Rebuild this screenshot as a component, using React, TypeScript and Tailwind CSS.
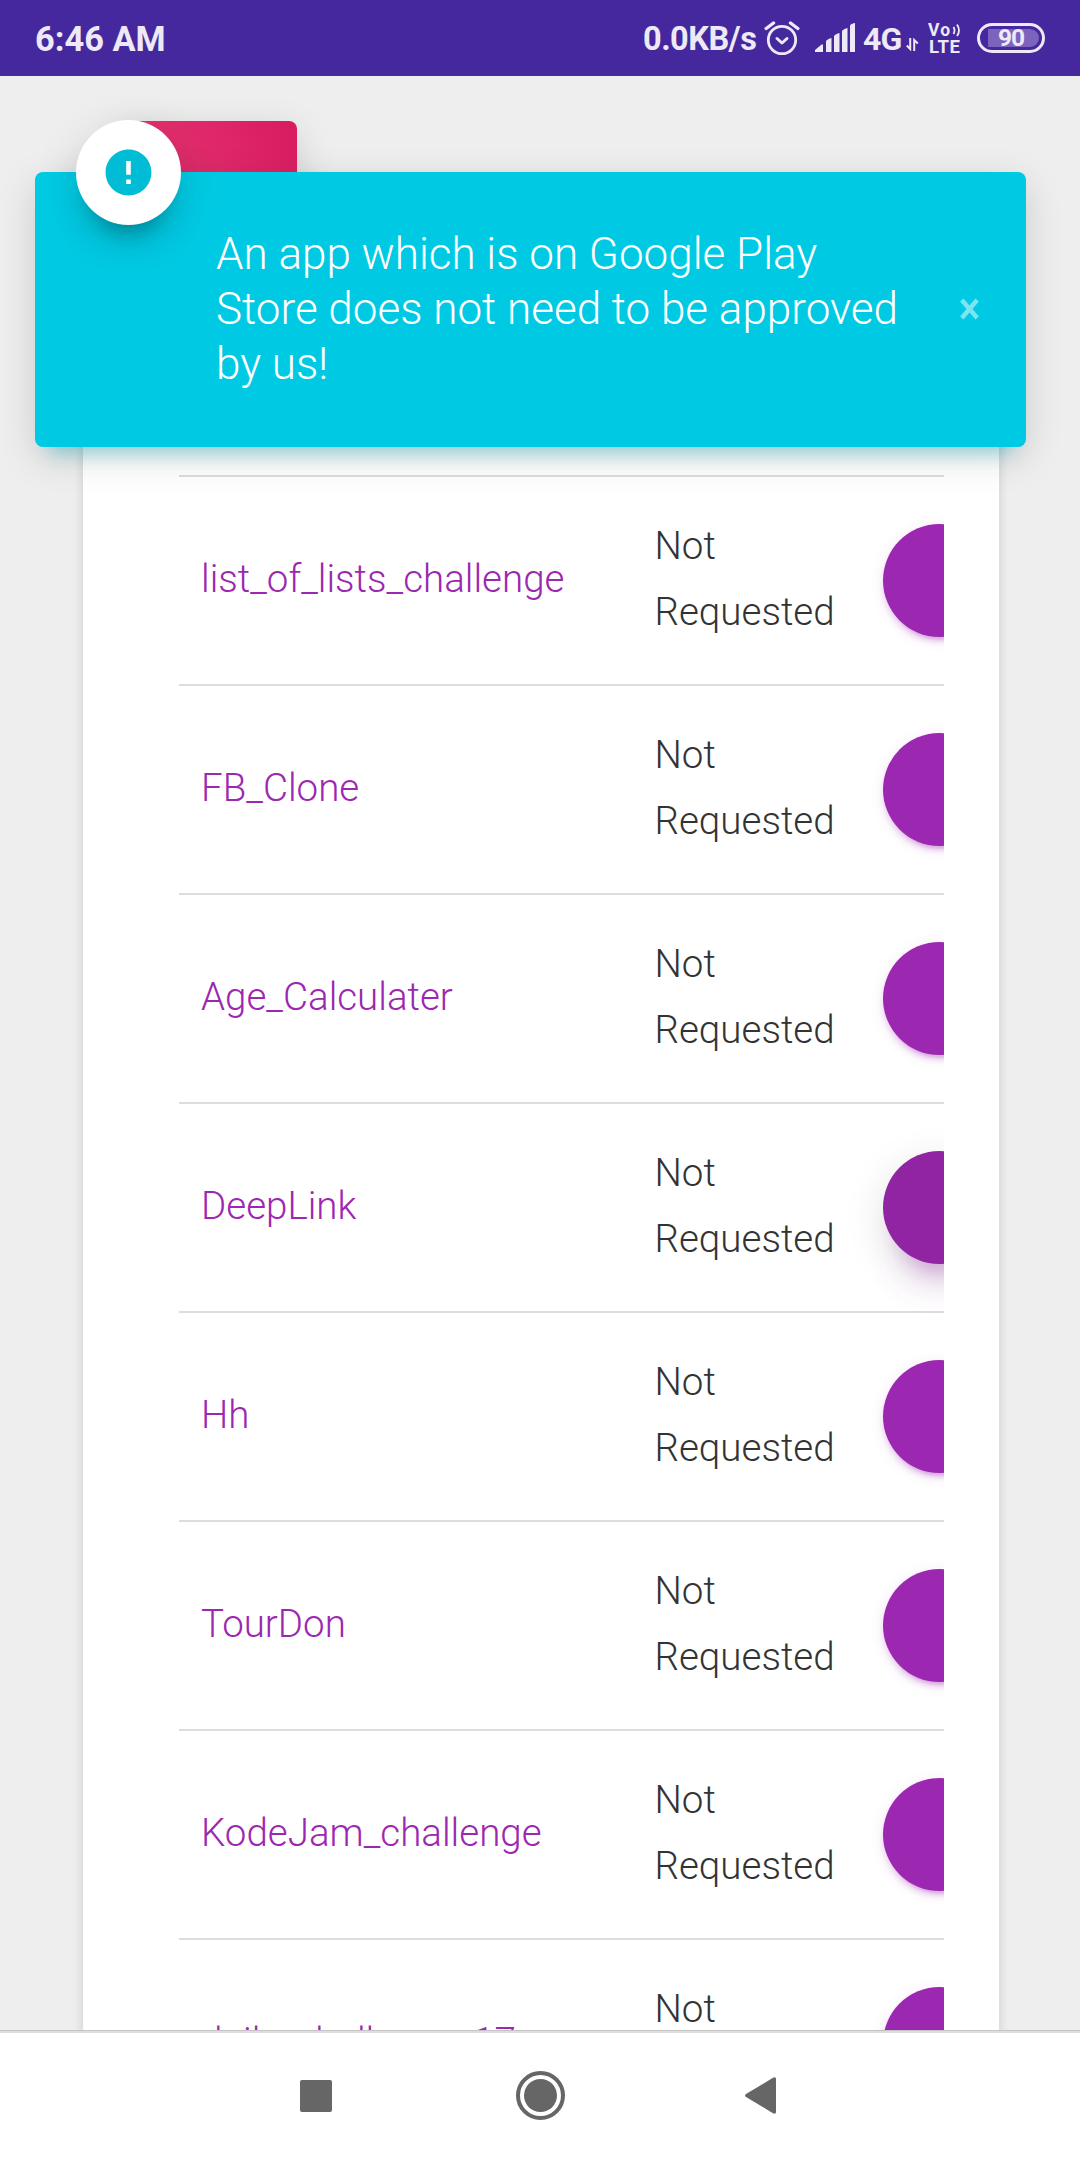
import { MdError } from "react-icons/md";

const challenges = [
  { name: "list_of_lists_challenge" },
  { name: "FB_Clone" },
  { name: "Age_Calculater" },
  { name: "DeepLink", active: true },
  { name: "Hh" },
  { name: "TourDon" },
  { name: "KodeJam_challenge" },
  { name: "daily_challenge_17" },
];

const AlarmIcon = () => (
  <svg width="36" height="36" viewBox="0 0 36 36" fill="none" stroke="#ede9f6" strokeLinecap="round">
    <circle cx="18" cy="20" r="13.7" strokeWidth="2.8" />
    <path d="M13 18.500l5 4.500 5-4.500" strokeWidth="3" strokeLinejoin="round" />
    <path d="M2.200 8.500L9.500 3M33.800 8.500L26.500 3" strokeWidth="3.400" />
  </svg>
);

const SignalIcon = () => (
  <svg width="41" height="30" viewBox="0 0 41 30" fill="#ede9f6">
    <path d="M0 29V27l6-5q2-1.500 2 .5v6.500zM11 29V18.500q0-2 5.500-3.500v14zM19 29V13.500q0-2 5.500-3.500v19zM27 29V8.500q0-2 5.500-3.500v24zM35 29V3q0-2 5-3v29z" />
  </svg>
);

const DataArrows = () => (
  <svg width="13" height="13" viewBox="0 0 13 13" fill="none" stroke="#ede9f6" strokeWidth="2">
    <path d="M4.200 0v11L.8 7.500M8.200 13V2l3.600 3.500" />
  </svg>
);

const VolteIcon = () => (
  <div className="flex w-[34px] flex-col gap-[1px] whitespace-nowrap">
    <div className="flex h-[16px] items-center">
      <span className="text-[17.500px] leading-[16px] tracking-[1.200px]">Vo</span>
      <svg className="ml-[1px]" width="9" height="14" viewBox="0 0 9 14" fill="none" stroke="#ede9f6" strokeWidth="1.800">
        <path d="M1.500 4q2 3.500 0 7M5 1.500q4 6 0 11.500" />
      </svg>
    </div>
    <span className="pl-[1px] text-[18.500px] leading-[16px] tracking-[0.600px]">LTE</span>
  </div>
);

const StatusBar = () => (
  <header className="flex h-[76px] items-center justify-between bg-[#45289d] pl-[35px] pr-[35px] font-bold text-[#ede9f6]">
    <span className="mt-[2px] text-[34.400px] leading-none">6:46 AM</span>
    <div className="flex items-center">
      <span className="mt-[2px] w-[114px] whitespace-nowrap text-[32.500px] leading-none tracking-[-0.5px]">0.0KB/s</span>
      <span className="ml-[7px]"><AlarmIcon /></span>
      <span className="ml-[15px]"><SignalIcon /></span>
      <span className="ml-[7px] mt-[2px] w-[40px] text-[32px] leading-none tracking-[-0.8px]">4G</span>
      <span className="ml-[3px] mt-[13px]"><DataArrows /></span>
      <span className="ml-[9px]"><VolteIcon /></span>
      <div className="ml-[15px] flex h-[30px] w-[68px] rounded-full border-[3px] border-[#ede9f6] p-[3px] pl-[8px]">
        <div className="flex flex-1 items-center rounded-l-[4px] rounded-r-full bg-[#7c63bd] pl-[10px] text-[24.500px] leading-none tracking-[-1px]">
          90
        </div>
      </div>
    </div>
  </header>
);

const Notification = () => (
  <div className="absolute left-[35px] top-[172px] flex h-[275px] w-[991px] items-center rounded-[8px] bg-[#00cae3] pl-[181px] shadow-[0_11px_38px_0_rgba(0,0,0,0.14),0_19px_18px_-13.750px_rgba(0,188,212,0.400)]">
    <div className="absolute -top-[52px] left-[41px] flex size-[105px] items-center justify-center rounded-full bg-white text-[#00bcd4] shadow-[0_27.500px_54px_-33px_rgba(0,0,0,0.420),0_11px_46px_0_rgba(0,0,0,0.120),0_22px_18px_-13.750px_rgba(0,0,0,0.200)]">
      <MdError size={55} />
    </div>
    <p className="w-[720px] text-[44px] font-light leading-[55px] text-white">
      An app which is on Google Play
      <br />
      Store does not need to be approved
      <br />
      by us!
    </p>
    <button className="mb-[2px] ml-[24px]">
      <svg width="19" height="22" viewBox="0 0 19 22" stroke="#7fe4f1" strokeWidth="4.500">
        <path d="M1.800 2l15.400 18M17.200 2L1.800 20" />
      </svg>
    </button>
  </div>
);

const ChallengeRow = ({ name, active }: { name: string; active?: boolean }) => (
  <li className="flex h-[209px] items-center border-t-2 border-[#dddddd] pl-[22px]">
    <span className="mb-[4px] w-[453.500px] shrink-0 text-[38.500px] text-[#9c27b0]">{name}</span>
    <span className="mb-[4px] w-[228.500px] shrink-0 text-[38.500px] leading-[66px] text-[#333333]">
      Not
      <br />
      Requested
    </span>
    <button
      className={
        active
          ? "size-[113px] shrink-0 rounded-full bg-[#9124a3] shadow-[0_38.500px_46px_-33px_rgba(156,39,176,0.420),0_11px_42px_0_rgba(0,0,0,0.120),0_22px_18px_-13.750px_rgba(156,39,176,0.200)]"
          : "size-[113px] shrink-0 rounded-full bg-[#9c27b0] shadow-[0_5.500px_5.500px_0_rgba(156,39,176,0.140),0_8.250px_2.750px_-5.500px_rgba(156,39,176,0.200),0_2.750px_13.750px_0_rgba(156,39,176,0.120)]"
      }
    />
  </li>
);

const NavBar = () => (
  <nav className="flex h-[130px] items-center border-t border-[#c4c4c4] bg-white">
    <div className="flex h-full w-full items-center border-t-2 border-[#dedede] pb-[2px] pl-[300px]">
      <div className="size-[32px] rounded-[2px] bg-[#666666]" />
      <div className="ml-[184px] flex size-[49px] items-center justify-center rounded-full border-[4px] border-[#666666]">
        <div className="size-[33px] rounded-full bg-[#666666]" />
      </div>
      <svg className="ml-[180px]" width="31" height="37" viewBox="0 0 31 37" fill="#666666">
        <path d="M1 17L28 .8q3-1.300 3 1.200v33q0 2.500-3 1.200L1 20q-2-1.500 0-3z" />
      </svg>
    </div>
  </nav>
);

const App = () => {
  return (
    <div className="flex h-[2160px] w-[1080px] flex-col overflow-hidden bg-[#eeeeee] font-['Roboto',sans-serif]">
      <StatusBar />
      <main className="min-h-0 flex-1 overflow-hidden pl-[83px] pt-[100px]">
        <section className="relative h-[2000px] w-[916px] rounded-[16px] bg-white pl-[96px] pt-[299px] shadow-[0_2.750px_11px_0_rgba(0,0,0,0.140)]">
          <div className="absolute -top-[55px] left-[41px] size-[173px] rounded-[8px] bg-[linear-gradient(60deg,#ec407a,#d81b60)] shadow-[0_11px_38px_0_rgba(0,0,0,0.140),0_19px_18px_-13.750px_rgba(233,30,99,0.400)]" />
          <ul className="w-[765px] overflow-hidden font-light">
            {challenges.map((item) => (
              <ChallengeRow key={item.name} {...item} />
            ))}
          </ul>
        </section>
      </main>
      <NavBar />
      <Notification />
    </div>
  );
};

export default App;
